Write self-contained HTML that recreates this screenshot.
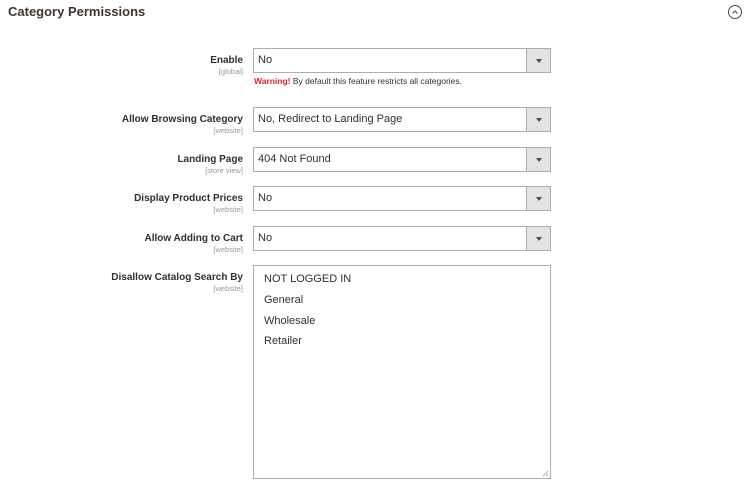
<!DOCTYPE html>
<html><head><style>
body{margin:0;width:750px;height:489px;background:#fff;font-family:"Liberation Sans",sans-serif;color:#303030;position:relative;overflow:hidden}
.t{position:absolute;left:8px;top:4px;font-size:13px;font-weight:bold;color:#41362f}
.ic{position:absolute;left:728px;top:5px;width:12px;height:12px;border:1px solid #514943;border-radius:50%}
.lab{position:absolute;right:507px;text-align:right;font-size:10px;font-weight:bold;color:#303030;line-height:13px}
.lab span{display:block;font-size:7.5px;font-weight:normal;color:#999;line-height:9px}
.sel{position:absolute;left:253px;width:296px;height:23px;border:1px solid #adadad;font-size:11px;line-height:23px;box-sizing:content-box}
.sel b{position:absolute;left:4px;font-weight:normal}
.sel i{position:absolute;right:0;top:0;width:23px;height:23px;background:#e3e3e3;border-left:1px solid #adadad}
.sel i:after{content:"";position:absolute;left:9px;top:10px;border:3px solid transparent;border-top:4px solid #514943}
.warn{position:absolute;left:254px;top:76px;font-size:8.5px;color:#303030}
.warn em{font-style:normal;font-weight:bold;color:#e22626}
.ta{position:absolute;left:253px;top:265px;width:296px;height:212px;border:1px solid #adadad;font-size:11px}
.ta div{position:absolute;left:10px}
</style></head><body>
<div class="t">Category Permissions</div>
<div class="ic"><svg width="12" height="12" style="position:absolute;left:0;top:0"><path d="M3.5 7.5L6 5l2.5 2.5" stroke="#514943" fill="none" stroke-width="1.1"/></svg></div>

<div class="lab" style="top:54px">Enable<span>[global]</span></div>
<div class="sel" style="top:48px"><b>No</b><i></i></div>
<div class="warn"><em>Warning!</em> By default this feature restricts all categories.</div>

<div class="lab" style="top:113px">Allow Browsing Category<span>[website]</span></div>
<div class="sel" style="top:107px"><b>No, Redirect to Landing Page</b><i></i></div>

<div class="lab" style="top:153px">Landing Page<span>[store view]</span></div>
<div class="sel" style="top:147px"><b>404 Not Found</b><i></i></div>

<div class="lab" style="top:192px">Display Product Prices<span>[website]</span></div>
<div class="sel" style="top:186px"><b>No</b><i></i></div>

<div class="lab" style="top:232px">Allow Adding to Cart<span>[website]</span></div>
<div class="sel" style="top:226px"><b>No</b><i></i></div>

<div class="lab" style="top:271px">Disallow Catalog Search By<span>[website]</span></div>
<div class="ta">
<div style="top:7px">NOT LOGGED IN</div>
<div style="top:28px">General</div>
<div style="top:49px">Wholesale</div>
<div style="top:69px">Retailer</div>
<svg width="8" height="8" style="position:absolute;right:1px;bottom:1px"><path d="M7 2L2 7M7 5L5 7" stroke="#999" stroke-width="0.8"/></svg>
</div>
</body></html>
